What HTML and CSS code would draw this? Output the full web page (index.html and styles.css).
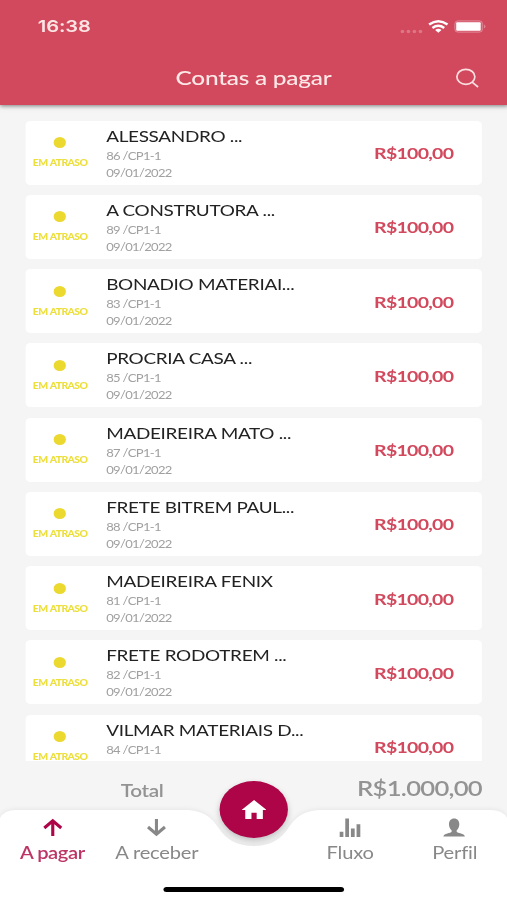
FILE: index.html
```html
<!DOCTYPE html>
<html lang="pt-BR">
<head>
<meta charset="utf-8">
<title>Contas a pagar</title>
<link rel="stylesheet" href="styles.css">
</head>
<body>
<div class="app">
  <header class="header">
    <div class="status">
      <span class="clock">16:38</span>
      <svg class="status-icons" viewBox="0 0 88 16" preserveAspectRatio="none">
        <g fill="#fff" fill-opacity=".25"><circle cx="3.500" cy="12.500" r="1.800"/><circle cx="9.500" cy="12.500" r="1.800"/><circle cx="15.500" cy="12.500" r="1.800"/><circle cx="21.500" cy="12.500" r="1.800"/></g>
        <g fill="none" stroke="#fff" stroke-width="2.500"><path d="M30.200 5.600Q39.400-1.200 48.600 5.600"/><path d="M33.500 8.900Q39.400 4.500 45.300 8.900"/></g>
        <path fill="#fff" d="M36.200 10.900Q39.400 8.800 42.600 10.900L39.400 13.700Z"/>
        <rect x="55.800" y="1.700" width="28" height="11.600" rx="3.500" fill="#fff" fill-opacity=".12" stroke="#fff" stroke-opacity=".25"/>
        <rect x="57.300" y="3.200" width="24.500" height="8.600" rx="1" fill="#fff"/>
        <path d="M85.300 5.500q2.500 2 0 4z" fill="#fff" fill-opacity=".4"/>
      </svg>
    </div>
    <div class="titlebar">
      <h1 class="title">Contas a pagar</h1>
      <svg class="search" viewBox="0 0 24 20" preserveAspectRatio="none"><g fill="none" stroke="#fbdfe0" stroke-width="1.700"><ellipse cx="10.800" cy="8.800" rx="9" ry="7.500"/><path d="M17 14.200L23 19"/></g></svg>
    </div>
  </header>
  <main class="list">
    <article class="card"><div class="state"><i class="dot"></i><span>EM ATRASO</span></div><div class="info"><h2>ALESSANDRO ...</h2><p>86 /CP1-1</p><p>09/01/2022</p></div><strong class="amount">R$100,00</strong></article>
    <article class="card"><div class="state"><i class="dot"></i><span>EM ATRASO</span></div><div class="info"><h2>A CONSTRUTORA ...</h2><p>89 /CP1-1</p><p>09/01/2022</p></div><strong class="amount">R$100,00</strong></article>
    <article class="card"><div class="state"><i class="dot"></i><span>EM ATRASO</span></div><div class="info"><h2>BONADIO MATERIAI...</h2><p>83 /CP1-1</p><p>09/01/2022</p></div><strong class="amount">R$100,00</strong></article>
    <article class="card"><div class="state"><i class="dot"></i><span>EM ATRASO</span></div><div class="info"><h2>PROCRIA CASA ...</h2><p>85 /CP1-1</p><p>09/01/2022</p></div><strong class="amount">R$100,00</strong></article>
    <article class="card"><div class="state"><i class="dot"></i><span>EM ATRASO</span></div><div class="info"><h2>MADEIREIRA MATO ...</h2><p>87 /CP1-1</p><p>09/01/2022</p></div><strong class="amount">R$100,00</strong></article>
    <article class="card"><div class="state"><i class="dot"></i><span>EM ATRASO</span></div><div class="info"><h2>FRETE BITREM PAUL...</h2><p>88 /CP1-1</p><p>09/01/2022</p></div><strong class="amount">R$100,00</strong></article>
    <article class="card"><div class="state"><i class="dot"></i><span>EM ATRASO</span></div><div class="info"><h2>MADEIREIRA FENIX</h2><p>81 /CP1-1</p><p>09/01/2022</p></div><strong class="amount">R$100,00</strong></article>
    <article class="card"><div class="state"><i class="dot"></i><span>EM ATRASO</span></div><div class="info"><h2>FRETE RODOTREM ...</h2><p>82 /CP1-1</p><p>09/01/2022</p></div><strong class="amount">R$100,00</strong></article>
    <article class="card"><div class="state"><i class="dot"></i><span>EM ATRASO</span></div><div class="info"><h2>VILMAR MATERIAIS D...</h2><p>84 /CP1-1</p></div><strong class="amount">R$100,00</strong></article>
  </main>
  <div class="total"><span class="total-label">Total</span><span class="total-value">R$1.000,00</span></div>
  <footer class="nav">
    <svg class="nav-shape" viewBox="0 0 507 91" preserveAspectRatio="none"><path fill="#fff" d="M0 9Q4 1 16 1H184C203 1 211 8 218 18C226 31 238 37 253.500 37C269 37 281 31 289 18C296 8 304 1 323 1H490Q503 1 507 9V91H0Z"/></svg>
    <button class="home" aria-label="Home"><svg viewBox="0 0 27 20" preserveAspectRatio="none"><path fill="#fff" d="M13.500 0L27 10.500H23V20H16.300V13.500H10.700V20H4V10.500H0Z"/></svg></button>
    <div class="tabs">
      <a class="tab active"><svg viewBox="0 0 24 20" preserveAspectRatio="none"><path fill="none" stroke="currentColor" stroke-width="3.300" d="M12 19V3M3 10.500L12 3L21 10.500"/></svg><span>A pagar</span></a>
      <a class="tab"><svg viewBox="0 0 24 20" preserveAspectRatio="none"><path fill="none" stroke="currentColor" stroke-width="3.300" d="M12 1V17M3 9.500L12 17L21 9.500"/></svg><span>A receber</span></a>
      <a class="tab fluxo"><svg viewBox="0 0 24 20" preserveAspectRatio="none"><path fill="currentColor" d="M.500 14.500h4V20h-4zM6.500.500h4V20h-4zM12.500 11h4v9h-4zM18.500 6.500h4V20h-4z"/></svg><span>Fluxo</span></a>
      <a class="tab"><svg viewBox="0 0 24 20" preserveAspectRatio="none"><path fill="currentColor" d="M12 .500C8.500.500 6.500 3 6.500 6.500C6.500 9 7.700 11.500 9.300 13V14.500C8.500 16 1 16 .500 19.500H23.500C23 16 15.500 16 14.700 14.500V13C16.300 11.500 17.500 9 17.500 6.500C17.500 3 15.500.500 12 .500Z"/></svg><span>Perfil</span></a>
    </div>
    <div class="indicator"></div>
  </footer>
</div>
</body>
</html>
```

FILE: styles.css
```css
* { box-sizing: border-box; margin: 0; padding: 0; }
html, body { width: 507px; height: 900px; overflow: hidden; background: #f5f5f5; }
/* The interface is laid out narrow and widened by 1.22. */
.app {
  width: 415.574px; height: 900px; display: flex; flex-direction: column;
  transform: scaleX(1.22); transform-origin: 0 0;
  font-family: Lato, "Liberation Sans", sans-serif; color: #222; background: #f5f5f5; overflow: hidden;
}
.header { height: 105px; flex: none; background: #d2495d; box-shadow: 0 1px 4px rgba(0,0,0,.5); z-index: 1; }
.status { height: 52px; display: flex; align-items: center; justify-content: space-between; padding: 0 16px 0 31px; }
.clock { font: 600 16.500px/20px Inter, sans-serif; color: #fbe4e4; letter-spacing: -.100px; }
.status-icons { width: 72.100px; height: 16px; margin-top: 1px; }
.titlebar { height: 53px; display: grid; grid-template-columns: 1fr auto 1fr; align-items: center; padding: 0 22.500px; }
.title { grid-column: 2; font-size: 20px; line-height: 26px; font-weight: 500; color: #fde9e8; letter-spacing: -.200px; margin-top: -4px; }
.search { width: 19.700px; height: 20px; justify-self: end; margin-top: -2px; }
.list { height: 656px; flex: none; overflow: hidden; padding: 15.700px 20.500px 0; display: flex; flex-direction: column; gap: 10.250px; }
.card { height: 64px; flex: none; display: flex; background: #fff; border-radius: 4px; padding-right: 23.500px; }
.state { width: 57.500px; display: flex; flex-direction: column; align-items: center; padding-top: 16.500px; }
.dot { width: 10.300px; height: 11px; border-radius: 50%; background: #ecd92f; }
.state span { margin-top: 10px; font-size: 8.600px; line-height: 11px; font-weight: 900; color: #ecdf3a; letter-spacing: -.500px; word-spacing: .500px; white-space: nowrap; }
.info { flex: 1; padding: 5px 0 0 9px; }
.info h2 { font-size: 15.500px; line-height: 20px; font-weight: 400; white-space: nowrap; letter-spacing: -.250px; margin-bottom: 1px; }
.info p { font-size: 10.700px; line-height: 17px; color: #a0a0a0; letter-spacing: -.550px; }
.info p + p { letter-spacing: -.550px; }
.amount { align-self: center; font-size: 16px; font-weight: 700; color: #d2495d; letter-spacing: -.600px; }
.total { height: 48px; flex: none; display: flex; justify-content: space-between; align-items: baseline; padding: 13px 20.500px 0 99px; color: #939393; }
.total-label { font-size: 17px; font-weight: 600; letter-spacing: -.300px; position: relative; top: 1px; }
.total-value { font-size: 21px; line-height: 28px; font-weight: 600; letter-spacing: -.600px; }
.nav { height: 91px; flex: none; position: relative; display: flex; flex-direction: column; align-items: center; }
.nav-shape { position: absolute; left: 0; top: 0; width: 100%; height: 100%; filter: drop-shadow(0 -1px 2px rgba(0,0,0,.06)); overflow: visible; }
.home { position: absolute; left: 179.700px; top: -28px; width: 56.500px; height: 57px; border: 0; border-radius: 50%; background: #ad0548; box-shadow: 0 3px 6px rgba(0,0,0,.22); display: flex; align-items: center; justify-content: center; }
.home svg { width: 20.500px; height: 19px; }
.tabs { position: relative; width: 100%; height: 77px; display: grid; grid-template-columns: 85.700px 85.700px 1fr 85.700px 85.700px; pointer-events: none; }
.tab { display: flex; flex-direction: column; align-items: center; padding-top: 8.500px; color: #888; font-size: 16.500px; line-height: 20px; white-space: nowrap; letter-spacing: -.150px; pointer-events: auto; }
.tab svg { width: 18.500px; height: 19px; margin-bottom: 6.500px; }
.active { color: #ad0548; }
.active span { color: #bd3566; font-weight: 600; letter-spacing: -.350px; }
.fluxo { grid-column: 4; }
.indicator { position: relative; top: 1px; width: 147.500px; height: 5px; background: #000; border-radius: 3px; }
```
